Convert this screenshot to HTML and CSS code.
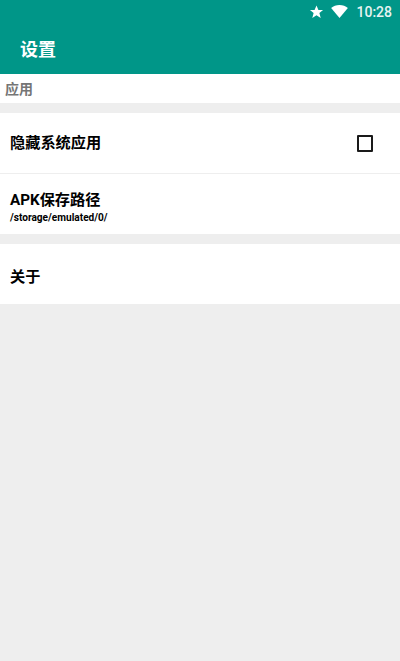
FILE: index.html
```html
<!DOCTYPE html>
<html lang="zh">
<head>
<meta charset="utf-8">
<title>设置</title>
<link rel="stylesheet" href="styles.css">
</head>
<body>
<header class="appbar">
  <div class="status">
    <svg class="star" viewBox="0 0 16 16"><path d="M8 .6l2.2 5h5.300l-4.200 3.600 1.500 5.600L8 11.800l-4.800 3 1.500-5.600L.5 5.600h5.300z"/></svg>
    <svg class="wifi" viewBox="0 0 18 14"><path d="M0 3.200C2.400 1.100 5.500 0 9 0s6.600 1.100 9 3.200L9 14z"/></svg>
    <span class="clock">10:28</span>
  </div>
  <h1 class="title">设置</h1>
</header>
<main>
  <div class="group-label">应用</div>
  <section class="group">
    <div class="row row-split">
      <span class="row-title">隐藏系统应用</span>
      <span class="checkbox"></span>
    </div>
    <div class="row row-low">
      <div class="row-title">APK保存路径</div>
      <div class="row-sub">/storage/emulated/0/</div>
    </div>
  </section>
  <section class="group">
    <div class="row row-about"><span class="row-title">关于</span></div>
  </section>
</main>
</body>
</html>
```
FILE: styles.css
```css
* { box-sizing: border-box; }
html, body { height: 100%; }
body {
  margin: 0;
  background: #eeeeee;
  font-family: Roboto, "Noto Sans CJK SC", sans-serif;
  color: #000;
  overflow: hidden;
}
.appbar { height: 74px; background: #009688; color: #fff; }
.status {
  height: 24px;
  display: flex;
  align-items: center;
  justify-content: flex-end;
  padding-right: 8px;
}
.star { width: 15px; height: 14px; fill: #fff; margin: 0 7px 0 0; }
.wifi { width: 17px; height: 13px; fill: #fff; margin: 0 8px 2px 0; }
.clock { font-size: 14px; font-weight: 500; color: #e6f4f2; }
.title {
  margin: 0;
  padding: 1px 0 0 20px;
  font-size: 18px;
  font-weight: 700;
  line-height: 50px;
}
.group-label {
  height: 29px;
  background: #fff;
  padding-left: 5px;
  font-size: 14px;
  font-weight: 700;
  line-height: 30px;
  color: #757575;
}
.group { background: #fff; margin-top: 10px; }
.row {
  height: 60px;
  padding: 0 10px;
  display: flex;
  flex-direction: column;
  justify-content: center;
}
.row + .row { border-top: 1px solid #eeeeee; height: 61px; }
.row-low { padding-top: 7px; }
.row-about { padding-top: 5px; }
.row-split {
  flex-direction: row;
  align-items: center;
  justify-content: space-between;
  padding-right: 27px;
}
.row-title { font-size: 15.2px; font-weight: 700; line-height: 20px; }
.row-sub { font-size: 10.1px; font-weight: 700; line-height: 14px; margin-top: 1px; }
.checkbox { width: 16.5px; height: 17px; border: 2px solid #1a1a1a; border-radius: 1px; }
```
